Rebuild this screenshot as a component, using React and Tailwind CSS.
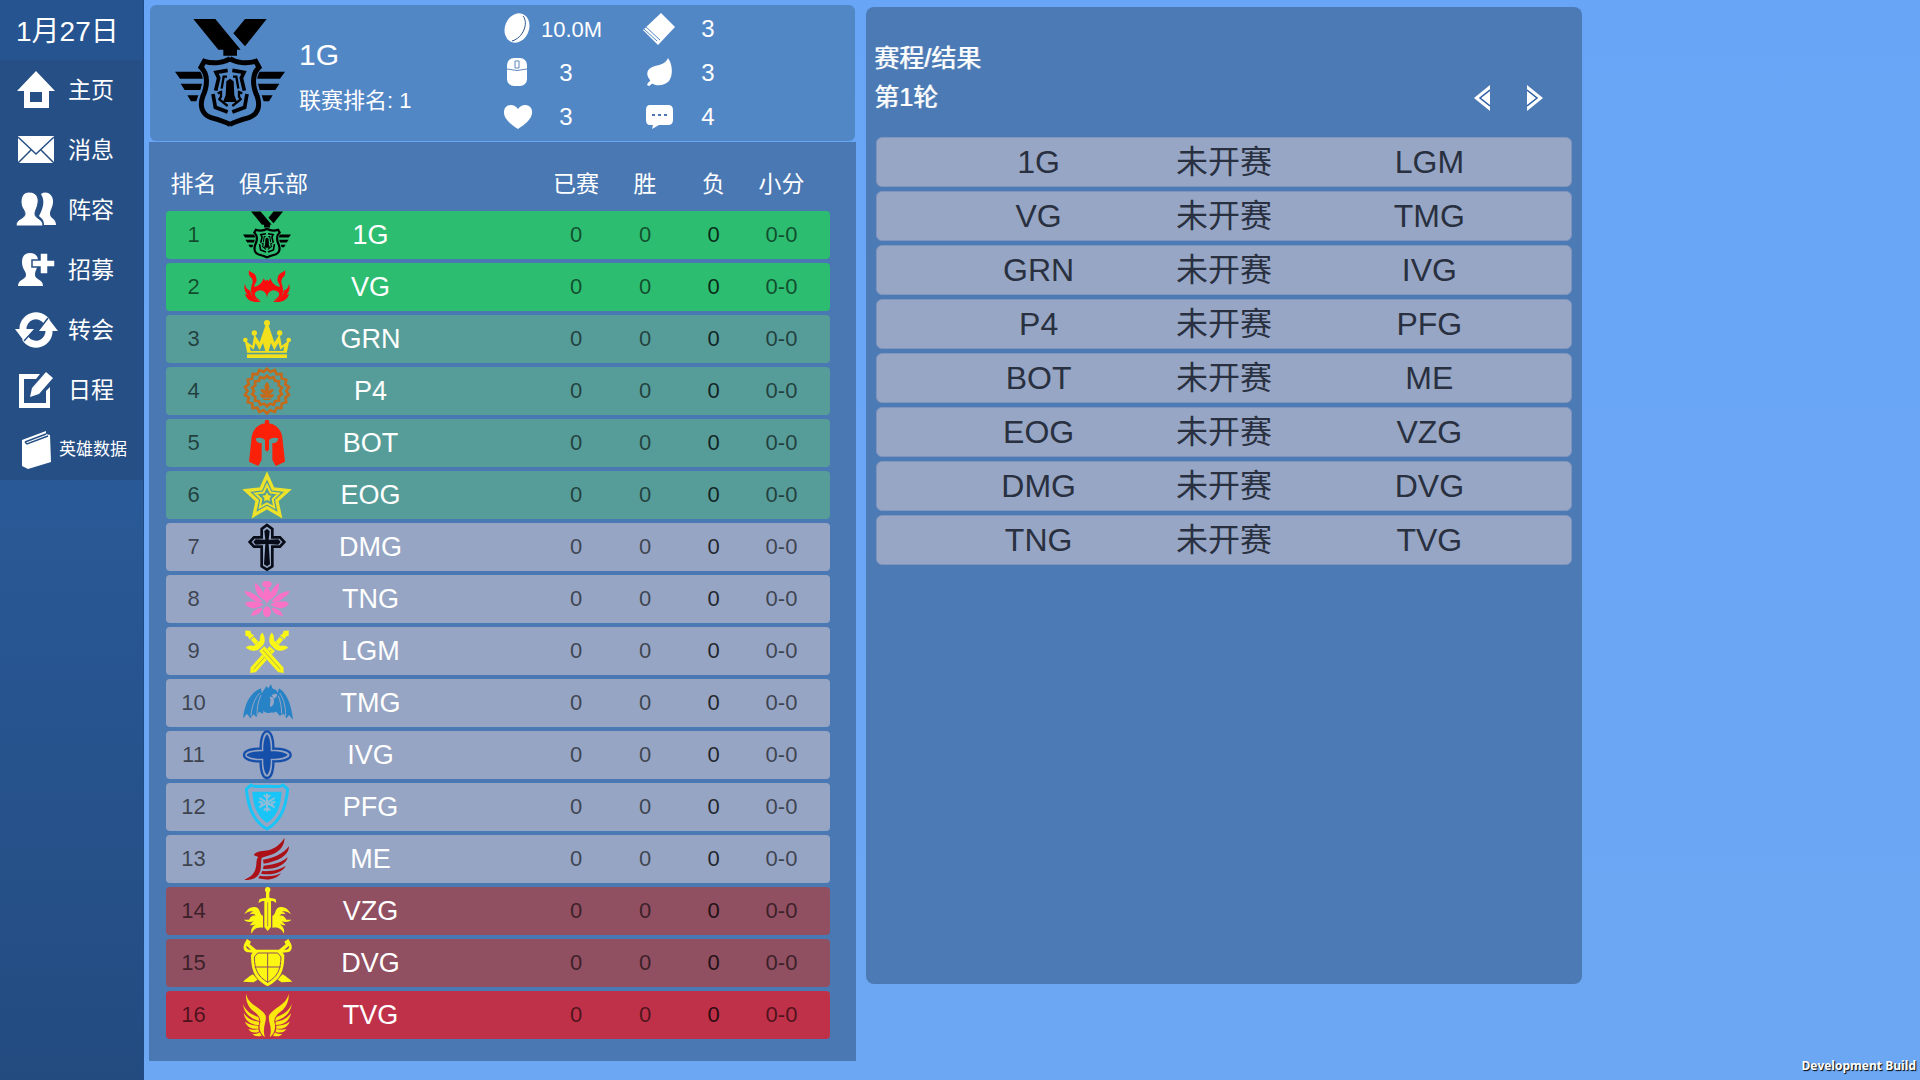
import { useState } from 'react';
import clsx from 'clsx';

/* ---------- crest helpers ---------- */

// draws its children twice, the second time flipped around the centre line
const Mirror = ({ size = 144, children }) => (
  <>
    <g>{children}</g>
    <g transform={`translate(${size} 0) scale(-1 1)`}>{children}</g>
  </>
);

const ringPath = (cx, cy, outer, inner, points, start = -90) => {
  const pts = Array.from({ length: points * 2 }, (_, i) => {
    const r = i % 2 ? inner : outer;
    const a = ((start + (i * 180) / points) * Math.PI) / 180;
    return `${(cx + r * Math.cos(a)).toFixed(1)} ${(cy + r * Math.sin(a)).toFixed(1)}`;
  });
  return `M${pts.join('L')}Z`;
};

const Crest = ({ children, fill }) => (
  <svg viewBox="0 0 144 144" className="mx-auto block size-12 overflow-visible" fill={fill} aria-hidden="true">
    {children}
  </svg>
);

const Medal = ({ className }) => (
  <svg viewBox="0 0 330 330" className={className} fill="#000" aria-hidden="true">
    <path d="M55 3H121L197 95H186V113H145V95H130Z" />
    <path d="M210 3H275L210 85L175 46Z" />
    <Mirror size={330}>
      <path
        d="M166 122C146 135 114 138 88 130L78 148C100 168 98 204 83 236C74 264 80 288 108 299C134 306 152 312 166 320"
        fill="none"
        stroke="#000"
        strokeWidth="15"
      />
      <path d="M0 161H76C80 168 83 174 83 182H15Z" />
      <path d="M17 197H81L76 216H29Z" />
      <path d="M37 232H70L64 250H48Z" />
      <path
        d="M158 157L123 163L131 180L122 218M114 228L121 268L158 282"
        fill="none"
        stroke="#000"
        strokeWidth="11"
      />
      <path
        d="M156 176H146L140 212M128 226L138 222V236L133 244L158 264"
        fill="none"
        stroke="#000"
        strokeWidth="7"
      />
    </Mirror>
    <path d="M165 182L176 190L178 232L186 252H144L152 232L154 190Z" />
  </svg>
);

// pommel up, blade down, centred on the origin
const Sword = () => (
  <>
    <path d="M0-92L11-80L7-72L10-62H-10L-7-72L-11-80Z" />
    <path d="M-7-60H7V-36H-7Z" />
    <path d="M-34-52C-24-54-18-46-12-40H12C18-46 24-54 34-52C30-30 18-24 10-22H-10C-18-24-30-30-34-52Z" />
    <path d="M-11-18H11V68L0 82L-11 68Z" />
    <path d="M0-12V66" stroke="#96955f" strokeWidth="2" />
  </>
);

/* ---------- club crests ---------- */

const crests = {
  '1G': <Medal className="mx-auto block size-12" />,
  VG: (
    <Crest fill="#fb0d0d">
      <Mirror>
        <path d="M18 22C26 32 38 28 40 46C44 58 32 62 34 72C46 70 56 62 62 46L67 54L72 50V104C70 92 67 88 60 84C54 80 42 82 36 90C34 98 40 106 52 112C38 112 24 102 24 84C24 64 32 60 28 50C26 42 14 40 18 22Z" />
        <path d="M6 62C8 76 14 80 22 82C22 96 32 106 44 112L54 116C30 120 10 112 6 92L14 96C4 84 2 74 6 62Z" />
      </Mirror>
    </Crest>
  ),
  GRN: (
    <Crest fill="#f2e01d">
      <circle cx="72" cy="24" r="9" />
      <Mirror>
        <circle cx="34" cy="54" r="8" />
        <circle cx="7" cy="75" r="7" />
        <path d="M12 110L5 76L28 92L34 58L50 82L69 26H73V108H67L60 84L50 106L38 84L32 104L20 94L23 108H73V113H12Z" />
        <path d="M12 118H73V129H12Z" />
      </Mirror>
    </Crest>
  ),
  P4: (
    <Crest fill="#c36a1b">
      <path d={ringPath(72, 72, 67, 58, 18)} fill="none" stroke="#c36a1b" strokeWidth="8" />
      <path d={ringPath(72, 72, 46, 39, 14)} fill="none" stroke="#c36a1b" strokeWidth="8" />
      <path d="M72 44C82 54 80 62 76 72C82 66 88 64 92 68C90 76 84 80 76 82H94L88 92H56L50 82H68C60 80 54 76 52 68C58 64 64 66 68 72C64 62 62 54 72 44Z" />
      <path d="M60 95H84V99H60Z" />
    </Crest>
  ),
  BOT: (
    <Crest fill="#fb2109">
      <circle cx="72" cy="9" r="7" />
      <Mirror>
        <path d="M73 12C42 14 26 34 25 64L18 128L46 141L56 122V72C46 74 39 68 38 58C50 54 62 56 66 64V92L73 98Z" />
      </Mirror>
    </Crest>
  ),
  EOG: (
    <Crest fill="#ece22a">
      <path d={ringPath(72, 79, 66, 31, 5)} fill="none" stroke="#ece22a" strokeWidth="10" />
      <path d={ringPath(72, 79, 37, 18, 5)} fill="none" stroke="#ece22a" strokeWidth="6" />
      <path d={ringPath(72, 79, 15, 8, 5)} />
    </Crest>
  ),
  DMG: (
    <Crest fill="#080c18">
      <path
        d="M72 6L88 18V43H111L124 57L111 71H88V130L72 140L56 130V71H33L20 57L33 43H56V18Z"
        fill="none"
        stroke="#080c18"
        strokeWidth="8"
      />
      <path d="M72 18L80 24L77 50L106 49L113 57L106 65L77 63L81 124L72 130L63 124L67 63L38 65L31 57L38 49L67 50L64 24Z" />
    </Crest>
  ),
  TNG: (
    <Crest fill="#fa72c6">
      <ellipse cx="72" cy="28" rx="14" ry="10" />
      <ellipse cx="72" cy="110" rx="12" ry="16" />
      <path d="M72 36C86 46 88 62 72 86C56 62 58 46 72 36Z" />
      <Mirror>
        <path d="M36 24C50 32 62 46 66 76C48 68 34 48 36 24Z" />
        <path d="M4 48C22 50 44 58 58 80C40 84 28 74 20 66C14 64 8 58 4 48Z" />
        <path d="M6 84C24 76 46 80 62 88C50 98 34 102 24 98C16 98 10 92 6 84Z" />
        <path d="M24 122C28 106 44 98 58 98C56 110 44 122 24 122Z" />
      </Mirror>
    </Crest>
  ),
  LGM: (
    <Crest fill="#fbf715">
      <g transform="translate(76 78) rotate(42)" stroke="#96a5c3" strokeWidth="1">
        <Sword />
      </g>
      <g transform="translate(68 78) rotate(-42)" stroke="#96a5c3" strokeWidth="1">
        <Sword />
      </g>
    </Crest>
  ),
  TMG: (
    <Crest fill="#2783c6">
      <path d="M54 28C24 40 6 68 0 118L12 104L22 118L32 106L40 114L48 98L60 104L68 60L58 54Z" />
      <path d="M108 28C130 42 144 70 150 122L138 108L130 118L122 104L110 110L100 98L88 102L92 60L100 54Z" />
      <path d="M50 42C34 60 26 82 24 112M54 48C46 64 42 84 42 108M110 42C122 60 128 82 128 112M106 50C112 66 116 84 116 104" fill="none" stroke="#96a5c3" strokeWidth="3" />
      <path d="M62 34L70 22L76 28L84 16L88 28L100 34L106 46L96 44L86 48C94 60 98 74 94 92C88 104 74 104 64 98C54 88 54 70 58 58L56 44Z" />
      <path d="M80 54C98 48 96 82 82 84C78 74 86 66 80 54Z" fill="#96a5c3" />
    </Crest>
  ),
  IVG: (
    <Crest fill="#164fa9">
      <path
        d="M72 1C86 1 92 30 91 53C114 52 143 58 143 72C143 86 114 92 91 91C92 114 86 141 72 141C58 141 52 114 53 91C30 92 3 86 3 72C3 58 30 52 53 53C52 30 58 1 72 1Z"
        fill="none"
        stroke="#164fa9"
        strokeWidth="7"
      />
      <path d="M72 10C80 16 84 40 83 61C104 60 128 64 134 72C128 80 104 84 83 83C84 104 80 126 72 132C64 126 60 104 61 83C40 84 16 80 10 72C16 64 40 60 61 61C60 40 64 16 72 10Z" />
    </Crest>
  ),
  PFG: (
    <Crest fill="#19c5f7">
      <path
        d="M24 6C32 14 52 10 72 10C92 10 112 14 120 6L134 18C130 54 122 110 72 138C22 110 14 54 10 18Z"
        fill="none"
        stroke="#19c5f7"
        strokeWidth="9"
      />
      <path d="M28 26H116C114 66 104 98 72 120C40 98 30 66 28 26Z" />
      <path
        d="M72 32V86M49 45L95 73M95 45L49 73M62 36L72 44L82 36M62 82L72 74L82 82M47 56L58 59L54 71M97 56L86 59L90 71"
        fill="none"
        stroke="#8fbcd9"
        strokeWidth="6"
      />
    </Crest>
  ),
  ME: (
    <Crest fill="#ab1116">
      <path d="M32 60C40 48 60 48 76 46C98 40 116 24 124 8C126 34 106 54 82 60L56 68C52 86 58 104 46 120C36 134 16 136 4 134C20 128 34 118 38 100C42 86 38 74 46 66Z" />
      <path d="M60 74C90 70 122 56 138 34C138 62 104 80 62 86Z" />
      <path d="M62 92C90 90 118 82 134 66C130 90 96 104 60 102Z" />
      <path d="M58 108C84 110 112 104 128 92C120 112 88 122 54 116Z" />
      <path d="M50 122C76 126 98 124 114 114C102 132 76 138 46 130Z" />
    </Crest>
  ),
  VZG: (
    <Crest fill="#fbf712">
      <circle cx="74" cy="8" r="8" />
      <path d="M69 12H79V32L98 36L100 48L90 42H84V120L74 132L64 120V42H58L46 48L50 36L69 32Z" />
      <path d="M74 46V118" stroke="#914f62" strokeWidth="2" />
      <Mirror size={148}>
        <path d="M60 86C48 84 54 62 36 60C20 58 10 70 4 82C14 74 24 70 32 74C26 74 22 78 20 82C28 78 36 80 38 86C28 84 22 90 18 98L2 98C12 106 24 106 32 102C26 108 24 112 20 114C28 116 34 114 38 112C26 120 22 130 26 140C32 124 44 120 60 122Z" />
      </Mirror>
    </Crest>
  ),
  DVG: (
    <Crest fill="#fbf712">
      <Mirror size={148}>
        <path d="M4 14L12 0L24 8L20 16L42 34L34 42L18 40C4 40-2 28 4 14ZM10 20C8 28 16 34 24 32Z" fillRule="evenodd" />
        <path d="M0 128C10 120 18 112 30 106L44 122L32 130Z" />
      </Mirror>
      <path d="M36 32H112L124 48C124 96 112 122 74 142C36 122 24 96 24 48Z" />
      <path
        d="M44 42H104L114 54C113 92 104 112 74 130C44 112 35 92 34 54ZM74 42V130M35 84H113"
        fill="none"
        stroke="#914f62"
        strokeWidth="3"
      />
    </Crest>
  ),
  TVG: (
    <Crest fill="#fbe80e">
      <Mirror size={146}>
        <path d="M10 8C12 40 56 50 68 74C72 92 56 110 66 138C52 130 46 110 52 92C52 76 40 66 26 56C16 46 6 26 10 8Z" />
        <path d="M0 38C6 58 24 70 46 78L50 90C24 84 2 66 0 38Z" />
        <path d="M2 66C14 84 30 90 48 92V102C24 102 6 90 2 66Z" />
        <path d="M6 92C20 102 34 104 46 104L46 113C26 116 10 106 6 92Z" />
        <path d="M16 114C28 118 38 116 46 114L48 122C34 128 22 124 16 114Z" />
        <path d="M28 128C38 130 44 128 50 124L56 134C44 138 34 136 28 128Z" />
      </Mirror>
    </Crest>
  ),
};

/* ---------- sidebar icons ---------- */

const NavIcon = ({ children }) => (
  <svg viewBox="0 0 40 40" className="size-10 shrink-0 overflow-visible" fill="#fff" aria-hidden="true">
    {children}
  </svg>
);

const navItems = [
  {
    id: 'home',
    label: '主页',
    icon: <path d="M20 1L39 21H33V38H8V21H1ZM14 22V32H26V22Z" fillRule="evenodd" />,
  },
  {
    id: 'messages',
    label: '消息',
    icon: (
      <>
        <path d="M2 6L38 6V33L2 33Z" />
        <path d="M2 7L20 24L38 7M2 33L15 20M38 33L25 20" fill="none" stroke="#264f86" strokeWidth="1.5" />
      </>
    ),
  },
  {
    id: 'squad',
    label: '阵容',
    icon: (
      <>
        <path d="M25 4C31 0 38 5 37 13C36 19 34 20 34 24C34 29 40 28 40 35H28C28 29 25 28 23 26C26 20 30 12 25 4Z" />
        <path
          d="M13 2C20 2 23 7 22 13C21 19 19 20 19 24C19 29 27 28 27 36H0C0 28 9 29 9 24C9 20 5 18 5 12C5 6 8 2 13 2Z"
          stroke="#264f86"
          strokeWidth="1"
        />
      </>
    ),
  },
  {
    id: 'recruit',
    label: '招募',
    icon: (
      <>
        <path d="M14 3C20 3 23 7 22 14C21 19 19 21 19 25C19 30 27 29 27 36H2C2 29 10 30 10 25C10 21 6 19 6 12C6 6 9 3 14 3Z" />
        <path
          d="M24 3H32V10H39V17H32V24H24V17H16V10H24Z"
          stroke="#264f86"
          strokeWidth="1.5"
        />
      </>
    ),
  },
  {
    id: 'transfer',
    label: '转会',
    icon: (
      <>
        <path d="M7 20A13 13 0 0 1 31 12M33 20A13 13 0 0 1 9 28" fill="none" stroke="#fff" strokeWidth="7" />
        <path d="M-1 19H19L8 31Z" />
        <path d="M42 21H22L32 8Z" />
        <path d="M8 31L19 19M32 8L22 21" stroke="#264f86" strokeWidth="1.5" />
      </>
    ),
  },
  {
    id: 'schedule',
    label: '日程',
    icon: (
      <>
        <path d="M3 4H24L20 9H8V33H30V21L34 17V38H3Z" />
        <path d="M30 2L37 8L23 24L14 27L16 18Z" />
      </>
    ),
  },
  {
    id: 'heroes',
    label: '英雄数据',
    small: true,
    icon: (
      <>
        <path d="M6 10L30 1V4L34 5L35 32L12 39L6 36Z" />
        <path d="M9 12L11 14L32 6M9 12L30 4" fill="none" stroke="#264f86" strokeWidth="1.5" />
      </>
    ),
  },
];

/* ---------- team stats ---------- */

const stats = [
  {
    label: '资金',
    value: '10.0M',
    icon: (
      <>
        <ellipse cx="16" cy="15" rx="12" ry="15" transform="rotate(22 16 15)" />
        <path d="M22 3C28 10 22 25 11 28" fill="none" stroke="#2c528c" strokeWidth="1" />
      </>
    ),
  },
  {
    label: '书籍',
    value: '3',
    icon: (
      <>
        <path d="M18 0L32 14L15 32L0 17Z" />
        <path d="M1 16L14 28M3 14L17 27" fill="none" stroke="#5287c6" strokeWidth="1" />
      </>
    ),
  },
  {
    label: '操作',
    value: '3',
    icon: (
      <>
        <rect x="6" y="1" width="20" height="28" rx="7" />
        <path d="M6 12Q16 15 26 12M14 4H18V11H14Z" fill="none" stroke="#5f87bd" strokeWidth="1" />
      </>
    ),
  },
  {
    label: '意识',
    value: '3',
    icon: <path d="M25 1C30 8 30 19 26 24C21 29 14 29 10 27C8 26 8 29 6 29L4 28C5 25 8 24 7 23C2 17 4 11 12 9C18 8 23 6 25 1Z" />,
  },
  {
    label: '心态',
    value: '3',
    icon: <path d="M17 28C9 23 2 17 3 10C4 3 13 2 17 8C21 2 30 3 31 10C32 17 25 23 17 28Z" />,
  },
  {
    label: '沟通',
    value: '4',
    icon: (
      <>
        <path d="M7 4H25Q30 4 30 9V19Q30 24 25 24H16L9 28L10 24H7Q3 24 3 19V9Q3 4 7 4Z" />
        <path d="M9 14H12M15 14H18M21 14H24" stroke="#4c78b6" strokeWidth="2" />
      </>
    ),
  },
];

const clubs = ['1G', 'VG', 'GRN', 'P4', 'BOT', 'EOG', 'DMG', 'TNG', 'LGM', 'TMG', 'IVG', 'PFG', 'ME', 'VZG', 'DVG', 'TVG'];

const fixtures = [
  ['1G', 'LGM'],
  ['VG', 'TMG'],
  ['GRN', 'IVG'],
  ['P4', 'PFG'],
  ['BOT', 'ME'],
  ['EOG', 'VZG'],
  ['DMG', 'DVG'],
  ['TNG', 'TVG'],
];

const rowColor = (rank) => {
  if (rank <= 2) return 'bg-[#2dbd70]';
  if (rank <= 6) return 'bg-[#569d99]';
  if (rank <= 13) return 'bg-[#96a5c3]';
  if (rank <= 15) return 'bg-[#914f62]';
  return 'bg-[#bf3149]';
};

const Sidebar = () => (
  <aside className="w-36 shrink-0 border-r border-[#1f4a84] bg-linear-to-b from-[#2f65ab] to-[#234b80]">
    <div className="flex h-15 items-center bg-[#265490] px-4 pt-1 text-[28px] leading-none">1月27日</div>
    <nav className="bg-[#264f86]">
      {navItems.map((item) => (
        <a
          key={item.id}
          href={`#${item.id}`}
          className={clsx('flex h-15 items-center pl-4', item.small ? 'gap-[3px] text-[17px]' : 'gap-3 text-[23px]')}
        >
          <NavIcon>{item.icon}</NavIcon>
          <span className="whitespace-nowrap">{item.label}</span>
        </a>
      ))}
    </nav>
  </aside>
);

const TeamHeader = () => (
  <header className="mx-px flex h-[136px] items-center rounded-md bg-[#5287c6] pl-[25px]">
    <Medal className="size-[110px] shrink-0" />
    <div className="ml-[14px] w-[202px] shrink-0 pt-[10px]">
      <h1 className="text-[30px] leading-[46px]">1G</h1>
      <p className="text-[22px] leading-[46px]">联赛排名: 1</p>
    </div>
    <dl className="grid grid-cols-2 gap-x-11">
      {stats.map((stat) => (
        <div key={stat.label} className="flex h-11 items-center">
          <dt className="w-8" aria-label={stat.label}>
            <svg viewBox="0 0 32 32" className="size-8" fill="#fff" aria-hidden="true">
              {stat.icon}
            </svg>
          </dt>
          <dd className={clsx('w-[66px] text-center', stat.value.length > 1 ? 'pl-2 text-[22px]' : 'text-2xl')}>
            {stat.value}
          </dd>
        </div>
      ))}
    </dl>
  </header>
);

const Standings = () => (
  <section className="mt-px bg-[#4a78b3] pt-3 pr-[26px] pb-[18px] pl-[17px]">
    <table className="w-full table-fixed border-separate border-spacing-x-0 border-spacing-y-1 text-center text-[22px] leading-8">
      <colgroup>
        <col className="w-[55px]" />
        <col className="w-[92px]" />
        <col />
        <col className="w-[68px]" />
        <col className="w-[70px]" />
        <col className="w-[67px]" />
        <col className="w-[83px]" />
      </colgroup>
      <thead>
        <tr className="h-[49px] text-[23px] whitespace-nowrap *:p-0 *:pt-[2px]">
          <th className="font-normal">排名</th>
          <th colSpan={2} className="text-left font-normal">
            <span className="pl-[18px]">俱乐部</span>
          </th>
          <th className="font-normal">已赛</th>
          <th className="font-normal">胜</th>
          <th className="font-normal">负</th>
          <th className="font-normal">
            <div className="pr-[14px]">小分</div>
          </th>
        </tr>
      </thead>
      <tbody>
        {clubs.map((club, i) => (
          <tr key={club} className="h-12 text-black/60 *:p-0">
            <td className={clsx('rounded-l', rowColor(i + 1))}>{i + 1}</td>
            <td className={rowColor(i + 1)}>{crests[club]}</td>
            <td className={rowColor(i + 1)}>
              <div className="w-[115px] text-[27px] text-white">{club}</div>
            </td>
            <td className={rowColor(i + 1)}>0</td>
            <td className={rowColor(i + 1)}>0</td>
            <td className={clsx('text-black/80', rowColor(i + 1))}>0</td>
            <td className={clsx('rounded-r', rowColor(i + 1))}>
              <div className="pr-[14px]">0-0</div>
            </td>
          </tr>
        ))}
      </tbody>
    </table>
  </section>
);

const Arrow = ({ flip }) => (
  <svg viewBox="0 0 16 26" className={clsx('h-[26px] w-4', flip && '-scale-x-100')} aria-hidden="true">
    <path d="M0 13L16 0V26Z" fill="#fff" />
    <path d="M16 5L6 13L16 21" fill="none" stroke="#2c5ea4" strokeWidth="1.5" />
  </svg>
);

const Schedule = () => {
  const [round, setRound] = useState(1);

  return (
    <section className="mt-[7px] mb-24 rounded-lg bg-[#4b7ab5] px-[10px] pt-8">
      <div className="-ml-[2px] text-[25px] leading-[39px] [text-shadow:1px_0_#ffffffb0]">
        <h2>赛程/结果</h2>
        <div className="flex items-center justify-between">
          <h3>第{round}轮</h3>
          <div className="mr-[29px] flex gap-[37px]">
            <button type="button" aria-label="上一轮" onClick={() => setRound((r) => Math.max(1, r - 1))}>
              <Arrow />
            </button>
            <button type="button" aria-label="下一轮" onClick={() => setRound((r) => r + 1)}>
              <Arrow flip />
            </button>
          </div>
        </div>
      </div>
      <ul className="mt-5 space-y-1">
        {fixtures.map(([home, away]) => (
          <li
            key={home}
            className="grid h-[50px] grid-cols-[256fr_184fr_256fr] items-center rounded-md border border-[#7f95c0] bg-[#97a6c5] text-center text-[32px] leading-none text-[#29303f]"
          >
            <span className="pl-[68px]">{home}</span>
            <span>未开赛</span>
            <span className="pr-[28px]">{away}</span>
          </li>
        ))}
      </ul>
    </section>
  );
};

const App = () => (
  <div className="relative flex min-h-screen bg-linear-to-b from-[#68a5f6] to-[#6ca7f3] font-['Liberation_Sans','Noto_Sans_CJK_SC',sans-serif] text-white">
    <Sidebar />
    <main className="grid flex-1 grid-cols-[707fr_716fr_328fr] gap-x-[10px] pl-[5px]">
      <div className="pt-[5px]">
        <TeamHeader />
        <Standings />
      </div>
      <Schedule />
    </main>
    <p className="absolute right-1 bottom-[6px] font-['Open_Sans',sans-serif] text-xs font-bold [text-shadow:1px_1px_1px_#000]">
      Development Build
    </p>
  </div>
);

export default App;
